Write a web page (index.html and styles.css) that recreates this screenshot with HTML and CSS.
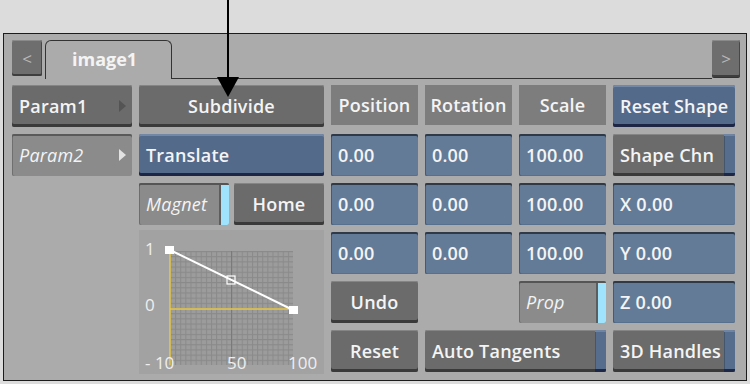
FILE: index.html
```html
<!DOCTYPE html>
<html lang="en">
<head>
  <meta charset="UTF-8">
  <title>image1 — shape controls</title>
  <link rel="stylesheet" href="styles.css">
</head>
<body>
  <div class="panel">
    <div class="tabbar">
      <div class="nav">&lt;</div>
      <div class="tab">image1</div>
      <div class="tabline"></div>
      <div class="nav nav-right">&gt;</div>
    </div>

    <div class="controls">
      <!-- row 1 -->
      <div class="cell btn menu">Param1 <span class="tri"></span></div>
      <div class="cell btn center">Subdivide</div>
      <div class="cell hdr">Position</div>
      <div class="cell hdr">Rotation</div>
      <div class="cell hdr">Scale</div>
      <div class="cell btn blue">Reset Shape</div>

      <!-- row 2 -->
      <div class="cell menu alt">Param2 <span class="tri"></span></div>
      <div class="cell btn blue">Translate</div>
      <div class="cell field">0.00</div>
      <div class="cell field">0.00</div>
      <div class="cell field">100.00</div>
      <div class="cell btn stripe">Shape Chn <span class="bar"></span></div>

      <!-- row 3 -->
      <div class="gap"></div>
      <div class="split">
        <div class="cell toggle">Magnet <span class="lamp"></span></div>
        <div class="cell btn center">Home</div>
      </div>
      <div class="cell field">0.00</div>
      <div class="cell field">0.00</div>
      <div class="cell field">100.00</div>
      <div class="cell field">X 0.00</div>

      <!-- row 4, the curve sits in column 2 for rows 4-6 -->
      <div class="graph">
        <svg width="185" height="144" viewBox="0 0 185 144">
          <defs>
            <pattern id="fine" width="5.125" height="5.18" patternUnits="userSpaceOnUse" x="31" y="21">
              <rect width="5.125" height="5.18" fill="#9c9c9c"/>
              <path d="M0 0.5H5.125M0.5 0V5.18" stroke="#8a8a8a" stroke-width="1"/>
            </pattern>
          </defs>
          <rect x="31" y="21" width="123" height="114" fill="url(#fine)"/>
          <line x1="92.5" y1="21" x2="92.5" y2="135" stroke="#7a7a7a"/>
          <line x1="31" y1="21" x2="31" y2="135" stroke="#e8c84a" stroke-width="1.5"/>
          <line x1="31" y1="79" x2="154" y2="79" stroke="#e8c84a" stroke-width="1.5"/>
          <line x1="31" y1="20" x2="154" y2="80" stroke="#ffffff" stroke-width="2"/>
          <rect x="26" y="16" width="9" height="8" fill="#ffffff"/>
          <rect x="88" y="46" width="8" height="8" fill="none" stroke="#ffffff" stroke-width="1.2"/>
          <rect x="150" y="76" width="9" height="8" fill="#ffffff"/>
          <text x="6" y="25" class="axis">1</text>
          <text x="6" y="81" class="axis">0</text>
          <text x="6" y="139" class="axis">- 10</text>
          <text x="88" y="139" class="axis">50</text>
          <text x="149" y="139" class="axis">100</text>
        </svg>
      </div>
      <div class="gap"></div>
      <div class="cell field">0.00</div>
      <div class="cell field">0.00</div>
      <div class="cell field">100.00</div>
      <div class="cell field">Y 0.00</div>

      <!-- row 5 -->
      <div class="gap"></div>
      <div class="cell btn center">Undo</div>
      <div class="gap"></div>
      <div class="cell toggle">Prop <span class="lamp"></span></div>
      <div class="cell field">Z 0.00</div>

      <!-- row 6 -->
      <div class="gap"></div>
      <div class="cell btn center">Reset</div>
      <div class="cell btn stripe wide">Auto Tangents <span class="bar"></span></div>
      <div class="cell btn stripe">3D Handles <span class="bar"></span></div>
    </div>
  </div>

  <svg class="pointer" width="24" height="98" viewBox="0 0 24 98">
    <line x1="12" y1="0" x2="12" y2="80" stroke="#000" stroke-width="2"/>
    <polygon points="1,77 23,77 12,97" fill="#000"/>
  </svg>
</body>
</html>
```

FILE: styles.css
```css
:root {
  --page: #dcdcdc;
  --panel: #ababab;
  --edge: #1c1c1c;
  --gray: #6b6b6b;
  --gray-light: #8b8b8b;
  --blue: #536a8b;
  --field: #637b97;
  --lamp: #9fe3fc;
  --text: #f4f4f4;
  --font: 'Open Sans', 'DejaVu Sans', sans-serif;
}

body {
  margin: 0;
  background: var(--page);
  font-family: var(--font);
  position: relative;
  width: 750px;
  height: 384px;
  overflow: hidden;
}

.panel {
  margin: 33px 0 0 3px;
  width: 742px;
  background: var(--panel);
  border: 1px solid var(--edge);
  padding-bottom: 8px;
}

/* tabs */
.tabbar {
  display: flex;
  align-items: flex-end;
  height: 45px;
  padding-left: 8px;
}

.nav {
  width: 30px;
  height: 36px;
  margin-bottom: 3px;
  background: #6e6e6e;
  box-shadow: inset 0 1px 0 #8a8a8a, inset 0 -2px 0 #3e3e3e, inset -1px 0 0 #474747;
  border-radius: 2px;
  color: #b9b9b9;
  font-size: 17px;
  display: flex;
  align-items: center;
  justify-content: center;
}

.nav-right {
  width: 28px;
  height: 37px;
  margin: 0 6px 1px 0;
  border-bottom: 1px solid #333;
}

.tab {
  width: 127px;
  height: 39px;
  margin-left: 3px;
  border: 1px solid #333;
  border-bottom: none;
  border-radius: 6px 6px 0 0;
  color: var(--text);
  font-size: 18px;
  font-weight: 700;
  padding-left: 26px;
  box-sizing: border-box;
  line-height: 36px;
}

.tabline {
  flex: 1;
  align-self: stretch;
  border-bottom: 1px solid #333;
}

/* control grid */
.controls {
  display: grid;
  grid-template-columns: 120px 185px 87px 87px 87px 122px;
  grid-auto-rows: 42px;
  column-gap: 7px;
  row-gap: 7px;
  padding: 6px 0 0 8px;
}

.cell {
  display: flex;
  align-items: center;
  padding: 0 7px;
  border-radius: 2px;
  color: var(--text);
  font-size: 18px;
  font-weight: 600;
  letter-spacing: 0.2px;
  white-space: nowrap;
  overflow: hidden;
}

.btn {
  background: var(--gray);
  box-shadow: inset 0 1px 0 #858585, inset 0 -3px 0 #3a3a3a;
}

.center {
  justify-content: center;
}

.btn.blue {
  background: var(--blue);
  box-shadow: inset 0 2px 0 #7388a6, inset 0 -3px 0 #1d2645;
}

.hdr {
  background: #7d7d7d;
  justify-content: center;
  border-radius: 0;
  height: 40px;
}

.field {
  background: var(--field);
  box-shadow: inset 0 2px 0 #303a47, inset 1px 0 0 #485a70, inset 0 -1px 0 #56708e;
}

.menu {
  justify-content: space-between;
  padding-right: 6px;
}

.menu .tri {
  width: 0;
  height: 0;
  border-top: 6px solid transparent;
  border-bottom: 6px solid transparent;
  border-left: 7px solid #545454;
}

.menu.alt {
  background: var(--gray-light);
  box-shadow: inset 0 2px 0 #5a5a5a, inset 1px 0 0 #6f6f6f;
  font-style: italic;
  font-weight: 500;
}

.menu.alt .tri {
  border-left-color: #e2e2e2;
}

.toggle {
  background: var(--gray-light);
  box-shadow: inset 0 2px 0 #555, inset 1px 0 0 #6d6d6d;
  font-style: italic;
  font-weight: 500;
  padding-right: 0;
  justify-content: space-between;
}

.toggle .lamp {
  align-self: stretch;
  width: 8px;
  margin-top: 2px;
  background: var(--lamp);
  border-left: 2px solid #5d5d5d;
}

.stripe {
  padding-right: 0;
  justify-content: space-between;
}

.stripe .bar {
  align-self: stretch;
  width: 11px;
  background: #566d8d;
  box-shadow: inset 0 2px 0 #7085a2, inset 0 -3px 0 #1e2745, inset 1px 0 0 #44556e;
}

.wide {
  grid-column: span 2;
}

.split {
  display: flex;
  gap: 5px;
}

.split .toggle {
  width: 90px;
  flex: none;
  box-sizing: border-box;
}

.split .btn {
  flex: 1;
}

.graph {
  grid-column: 2;
  grid-row: 4 / 7;
  margin: -2px 0;
  background: #a2a2a2;
}

.graph svg {
  display: block;
}

.axis {
  fill: #efefef;
  font-family: var(--font);
  font-size: 17px;
}

.pointer {
  position: absolute;
  left: 216px;
  top: 0;
}
```
